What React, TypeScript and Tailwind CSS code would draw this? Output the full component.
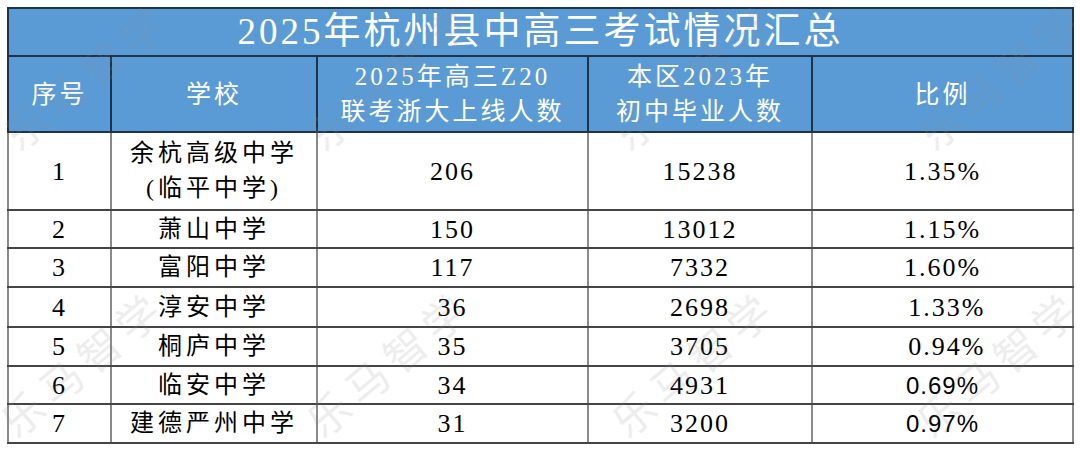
import React from "react";

type Row = {
  no: string;
  school: string[];
  passed: string;
  graduates: string;
  ratio: string;
  sansRatio?: boolean;
};

const rows: Row[] = [
  { no: "1", school: ["余杭高级中学", "(临平中学)"], passed: "206", graduates: "15238", ratio: "1.35%" },
  { no: "2", school: ["萧山中学"], passed: "150", graduates: "13012", ratio: "1.15%" },
  { no: "3", school: ["富阳中学"], passed: "117", graduates: "7332", ratio: "1.60%" },
  { no: "4", school: ["淳安中学"], passed: "36", graduates: "2698", ratio: " 1.33%" },
  { no: "5", school: ["桐庐中学"], passed: "35", graduates: "3705", ratio: " 0.94%" },
  { no: "6", school: ["临安中学"], passed: "34", graduates: "4931", ratio: "0.69%", sansRatio: true },
  { no: "7", school: ["建德严州中学"], passed: "31", graduates: "3200", ratio: "0.97%", sansRatio: true },
];

const rowHeights = ["h-[78px]", "h-[38px]", "h-[39px]", "h-[40px]", "h-[39px]", "h-[38px]", "h-[39px]"];

// faint diagonal watermark, tiled over the whole table
const marks = [
  { x: 85, y: 75 },
  { x: 390, y: 75 },
  { x: 695, y: 75 },
  { x: 1000, y: 75 },
  { x: 82, y: 362 },
  { x: 388, y: 362 },
  { x: 693, y: 362 },
  { x: 998, y: 362 },
];

const serif = "[font-family:'Liberation_Serif','Noto_Sans_CJK_SC',serif]";

export default function App() {
  const head = "border-2 border-[#1f3249] text-white text-[25px] leading-[35px] tracking-[3px] text-center align-middle font-normal";
  const base = "border-y-2 border-y-[#454545] border-x-2 border-x-[#8a8a8a] text-black text-center align-middle whitespace-pre";
  const text = `${base} text-[24px] leading-[35px] tracking-[4px]`;
  const num = `${base} text-[26px] leading-[35px] tracking-[2px]`;

  return (
    <div className={`relative w-[1080px] h-[451px] overflow-hidden bg-white ${serif}`}>
      <div className="pl-[7px] pt-[7px]">
        <table className="w-[1065px] table-fixed border-collapse border-2 border-[#555555]">
          <colgroup>
            <col className="w-[103px]" />
            <col className="w-[206px]" />
            <col className="w-[271px]" />
            <col className="w-[224px]" />
            <col className="w-[261px]" />
          </colgroup>
          <thead className="bg-[#5b9bd5]">
            <tr className="h-[48px]">
              <th colSpan={5} className="border-2 border-[#1f3249] text-white text-[37px] leading-[44px] tracking-[3px] font-normal text-center">
                2025年杭州县中高三考试情况汇总
              </th>
            </tr>
            <tr className="h-[76px]">
              <th className={head}>序号</th>
              <th className={head}>学校</th>
              <th className={head}>
                <div>2025年高三Z20</div>
                <div>联考浙大上线人数</div>
              </th>
              <th className={head}>
                <div>本区2023年</div>
                <div>初中毕业人数</div>
              </th>
              <th className={head}>比例</th>
            </tr>
          </thead>
          <tbody>
            {rows.map((r, i) => (
              <tr key={r.no} className={rowHeights[i]}>
                <td className={num}>{r.no}</td>
                <td className={text}>
                  {r.school.map((s) => (
                    <div key={s}>{s}</div>
                  ))}
                </td>
                <td className={num}>{r.passed}</td>
                <td className={num}>{r.graduates}</td>
                <td className={num}>
                  {r.sansRatio ? (
                    <span className="[font-family:'Liberation_Sans',sans-serif] text-[24px] tracking-[1px]">{r.ratio}</span>
                  ) : (
                    r.ratio
                  )}
                </td>
              </tr>
            ))}
          </tbody>
        </table>
      </div>

      <div className="pointer-events-none absolute inset-0">
        {marks.map((m) => (
          <div
            key={`${m.x}-${m.y}`}
            className="absolute -translate-x-1/2 -translate-y-1/2 -rotate-[40deg] whitespace-nowrap text-[42px] leading-none tracking-[8px] text-[#8f8f8f] opacity-15 [font-family:'Noto_Sans_CJK_SC',sans-serif]"
            style={{ left: m.x, top: m.y }}
          >
            乐马智学
          </div>
        ))}
      </div>
    </div>
  );
}
